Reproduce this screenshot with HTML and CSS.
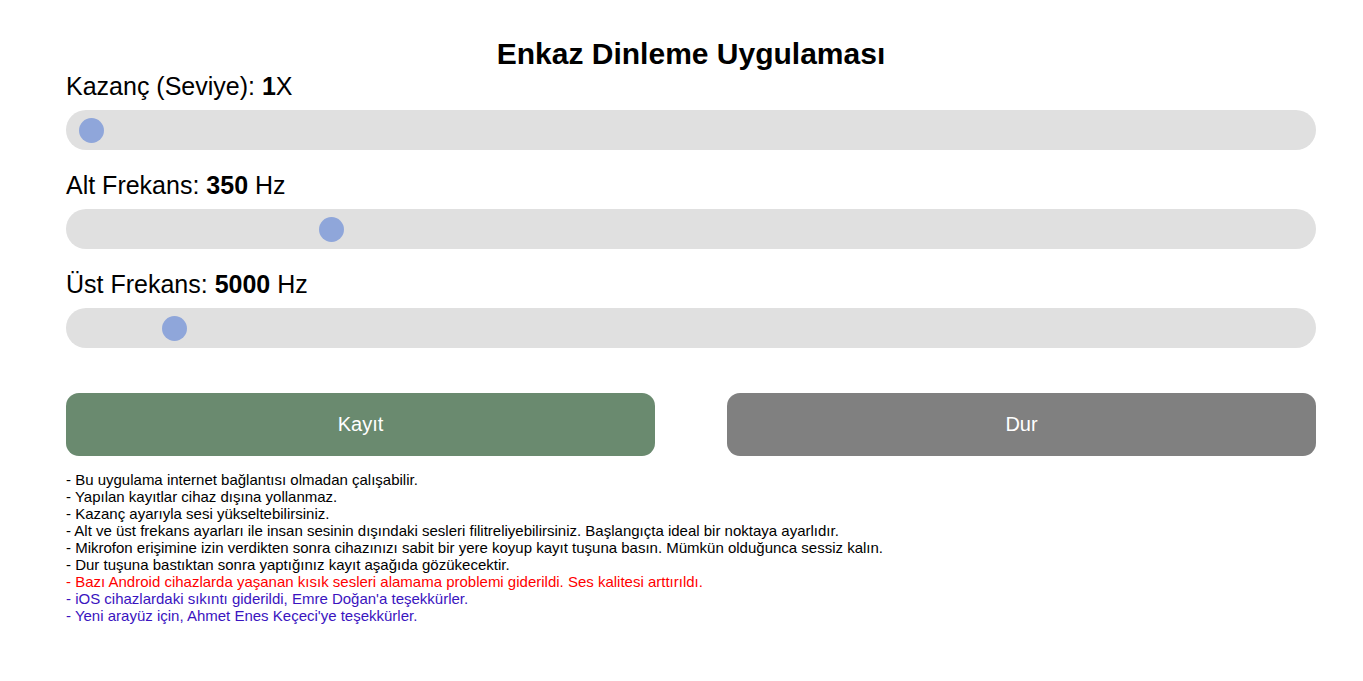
FILE: index.html
```html
<!DOCTYPE html>
<html lang="tr">
<head>
<meta charset="utf-8">
<title>Enkaz Dinleme Uygulaması</title>
<link rel="stylesheet" href="styles.css">
</head>
<body>
<main class="app">
  <h1 class="title">Enkaz Dinleme Uygulaması</h1>
  <div class="control">
    <label class="label" for="gain">Kazanç (Seviye): <b>1</b>X</label>
    <input class="range" id="gain" type="range" min="1" max="20" value="1">
  </div>
  <div class="control">
    <label class="label" for="low">Alt Frekans: <b>350</b> Hz</label>
    <input class="range" id="low" type="range" min="0" max="1750" value="350">
  </div>
  <div class="control">
    <label class="label" for="high">Üst Frekans: <b>5000</b> Hz</label>
    <input class="range" id="high" type="range" min="0" max="72000" value="5000">
  </div>
  <div class="buttons">
    <button class="btn btn-rec">Kayıt</button>
    <button class="btn btn-stop">Dur</button>
  </div>
  <div class="notes">
    <div>- Bu uygulama internet bağlantısı olmadan çalışabilir.</div>
    <div>- Yapılan kayıtlar cihaz dışına yollanmaz.</div>
    <div>- Kazanç ayarıyla sesi yükseltebilirsiniz.</div>
    <div>- Alt ve üst frekans ayarları ile insan sesinin dışındaki sesleri filitreliyebilirsiniz. Başlangıçta ideal bir noktaya ayarlıdır.</div>
    <div>- Mikrofon erişimine izin verdikten sonra cihazınızı sabit bir yere koyup kayıt tuşuna basın. Mümkün olduğunca sessiz kalın.</div>
    <div>- Dur tuşuna bastıktan sonra yaptığınız kayıt aşağıda gözükecektir.</div>
    <div class="note-red">- Bazı Android cihazlarda yaşanan kısık sesleri alamama problemi giderildi. Ses kalitesi arttırıldı.</div>
    <div class="note-blue">- iOS cihazlardaki sıkıntı giderildi, Emre Doğan'a teşekkürler.</div>
    <div class="note-blue">- Yeni arayüz için, Ahmet Enes Keçeci'ye teşekkürler.</div>
  </div>
</main>
</body>
</html>
```
FILE: styles.css
```css
html, body {
  margin: 0;
  padding: 0;
  background: #ffffff;
}
body {
  font-family: "Liberation Sans", Arial, sans-serif;
  color: #000;
}
.app {
  width: 1250px;
  margin-left: 66px;
  padding-top: 36px;
}
.title {
  margin: 0;
  text-align: center;
  font-size: 30px;
  font-weight: bold;
  line-height: 36px;
}
.control {
  display: flex;
  flex-direction: column;
}
.label {
  font-size: 25px;
  line-height: 28px;
  margin-top: 0;
  margin-bottom: 10px;
}
.control + .control .label {
  margin-top: 21px;
}
.label b {
  font-weight: bold;
}
.range {
  -webkit-appearance: none;
  appearance: none;
  width: 100%;
  height: 40px;
  margin: 0;
  padding: 0 13px;
  box-sizing: border-box;
  background: #e0e0e0;
  border-radius: 20px;
  outline: none;
}
.range::-webkit-slider-runnable-track {
  height: 40px;
  background: transparent;
  display: flex;
  align-items: center;
}
.range::-webkit-slider-thumb {
  -webkit-appearance: none;
  appearance: none;
  width: 25px;
  height: 25px;
  border-radius: 50%;
  background: #8fa6da;
  border: none;
  margin-top: 7.5px;
}
.range::-moz-range-thumb {
  width: 25px;
  height: 25px;
  border-radius: 50%;
  background: #8fa6da;
  border: none;
}
.buttons {
  display: flex;
  gap: 72px;
  margin-top: 45px;
}
.btn {
  flex: 1;
  height: 63px;
  border: none;
  border-radius: 13px;
  color: #fff;
  font-family: "Liberation Sans", Arial, sans-serif;
  font-size: 20px;
}
.btn-rec {
  background: #6a8a6f;
}
.btn-stop {
  background: #808080;
}
.notes {
  margin-top: 15px;
  font-size: 15px;
  line-height: 17px;
}
.note-red {
  color: #ff0000;
}
.note-blue {
  color: #3a14c0;
}
```
